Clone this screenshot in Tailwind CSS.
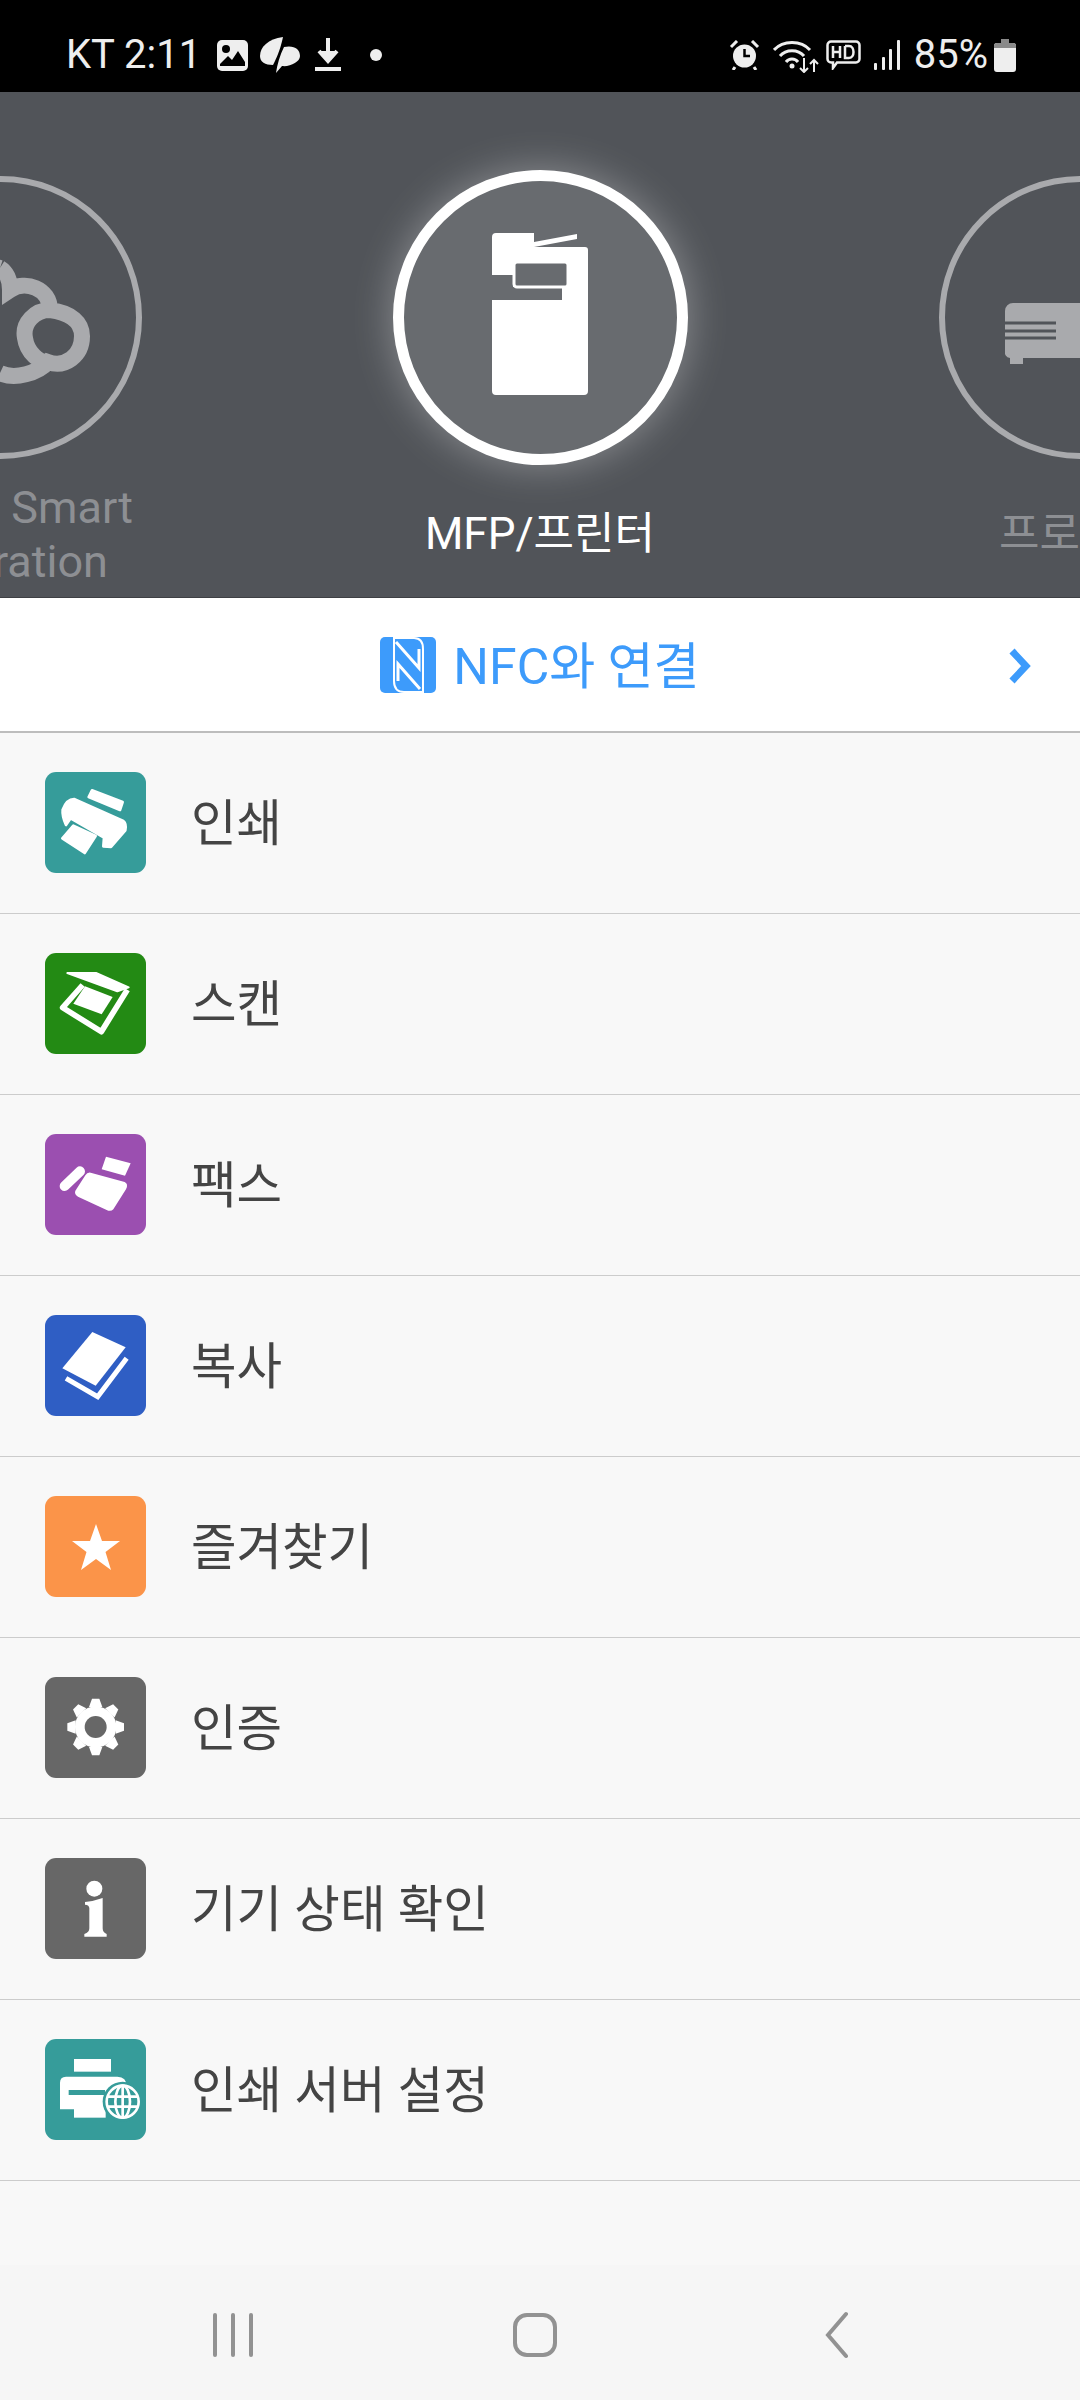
<!DOCTYPE html>
<html>
  <head>
    <title>MFP</title>
    <script src="https://cdn.jsdelivr.net/npm/@tailwindcss/browser@4"></script>
  </head>
  <body class="bg-[#f8f8f8]">
    <main class="w-[1080px] h-[2400px] overflow-hidden flex flex-col font-['Roboto','Noto_Sans_CJK_KR',sans-serif]">
      <!-- status bar -->
      <div class="h-[92px] bg-black flex items-center justify-between pl-[66px] pr-[64px] text-[#eeeeee] text-[40px] pt-[18px] shrink-0">
        <div class="flex items-center">
          <span class="leading-none w-[131px] whitespace-nowrap">KT 2:11</span>
          <svg class="ml-[20px]" width="31" height="31" viewBox="0 0 31 31"><rect x="0" y="0" width="31" height="31" rx="5" fill="#eee"/><circle cx="9" cy="9" r="4" fill="#000"/><path d="M3 24 L11 16 L15 20 L21 11 L28 22 V26 H3 Z" fill="#000"/></svg>
          <svg class="ml-[12px]" width="41" height="36" viewBox="0 0 41 36"><path d="M23 0 C8 2 0 10 0 19 C0 25 5 28 13 28 C16 22 20 14 23 0 Z" fill="#eee"/><path d="M24 10 C34 8 40 12 40 19 C40 25 30 30 22 29 L16 36 C17 28 20 18 24 10 Z" fill="#eee"/></svg>
          <svg class="ml-[14px]" width="26" height="34" viewBox="0 0 26 34"><path d="M13 0 V20 M4 13 L13 23 L22 13" fill="#eee" stroke="#eee" stroke-width="4"/><rect x="0" y="29" width="26" height="4" fill="#eee"/></svg>
          <span class="ml-[29px] w-[12px] h-[12px] rounded-full bg-[#eee]"></span>
        </div>
        <div class="flex items-center">
          <svg width="31" height="30" viewBox="0 0 31 30"><circle cx="15.5" cy="16" r="11.5" fill="#eee"/><path d="M15.5 9 V16 H21" stroke="#000" stroke-width="2.5" fill="none"/><path d="M2 7 L8 1 M29 7 L23 1 M6 27 L4 30 M25 27 L27 30" stroke="#eee" stroke-width="3"/></svg>
          <svg class="ml-[13px]" width="46" height="35" viewBox="0 0 46 35"><path d="M1 12 C10 2 28 2 37 12 M7 18 C13 11 25 11 31 18 M13 24 C16 20 22 20 25 24" stroke="#eee" stroke-width="3" fill="none"/><circle cx="19" cy="28" r="2.5" fill="#eee"/><path d="M31 20 V34 M27 30 L31 34 L35 30 M41 34 V22 M37 26 L41 22 L45 26" stroke="#eee" stroke-width="2" fill="none"/></svg>
          <svg class="ml-[7px]" width="35" height="30" viewBox="0 0 35 30"><path d="M5 1.5 H30 A3.5 3.5 0 0 1 33.500 5 V19 A3.500 3.500 0 0 1 30 22.500 H11 L7 28 V22.500 H5 A3.500 3.500 0 0 1 1.500 19 V5 A3.500 3.500 0 0 1 5 1.500 Z" stroke="#eee" stroke-width="2.500" fill="none"/><path d="M7 6 V18 M14 6 V18 M7 12 H14 M19 6 V18 H23 C29 18 29 6 23 6 H19" stroke="#eee" stroke-width="2.500" fill="none"/></svg>
          <svg class="ml-[12px]" width="28" height="30" viewBox="0 0 28 30"><rect x="1" y="23" width="3" height="7" rx="1" fill="#eee"/><rect x="9" y="17" width="3" height="13" rx="1" fill="#eee"/><rect x="16" y="9" width="3" height="21" rx="1" fill="#eee"/><rect x="24" y="0" width="3" height="30" rx="1" fill="#eee"/></svg>
          <span class="ml-[13px] leading-none">85%</span>
          <svg class="ml-[6px]" width="22" height="33" viewBox="0 0 22 33"><path d="M7 0 H15 V4 H19 A3 3 0 0 1 22 7 V30 A3 3 0 0 1 19 33 H3 A3 3 0 0 1 0 30 V7 A3 3 0 0 1 3 4 H7 Z" fill="#eee"/><path d="M7 0 H15 V4 H19 A3 3 0 0 1 22 7 V9 H0 V7 A3 3 0 0 1 3 4 H7 Z" fill="#8a8a8a"/></svg>
        </div>
      </div>

      <!-- device carousel -->
      <section class="h-[506px] bg-[#515459] border-b border-[#3e4044] overflow-hidden flex shrink-0">
        <div class="w-[540px] shrink-0 ml-[-270px] flex flex-col items-center pt-[84px]">
          <div class="w-[283px] h-[283px] rounded-full border-[6px] border-[#a9aaad] flex items-center justify-center">
            <svg class="overflow-visible" width="200" height="200" viewBox="-100 -100 200 200"><path d="M0 -50 C8 -45 10 -35 10 -28 C25 -38 50 -30 50 -8 C72 -5 82 5 82 18 C82 38 65 50 48 44 C38 55 15 62 0 55 M50 -8 C35 -8 22 5 25 20 C27 35 40 45 48 44 M0 -50 C-30 -60 -60 -30 -50 -10 C-80 -5 -90 50 -40 55 C-30 60 -15 60 0 55" fill="none" stroke="#a9aaad" stroke-width="16"/></svg>
          </div>
          <div class="mt-[22px] text-[45px] leading-[54px] text-[#8d8f93] text-center whitespace-nowrap">Device Smart<br />Integration</div>
        </div>
        <div class="w-[540px] shrink-0 flex flex-col items-center pt-[78px]">
          <div class="w-[295px] h-[295px] rounded-full border-[11px] border-white bg-[#686b6f] shadow-[0_0_40px_rgba(255,255,255,0.35)] flex items-center justify-center">
            <svg class="mb-[7px]" width="96" height="162" viewBox="0 0 96 162"><path d="M42 9 L85 1 V6 L42 14 Z" fill="#fff"/><path d="M4 0 H42 V14 H93 A3 3 0 0 1 96 17 V158 A4 4 0 0 1 92 162 H4 A4 4 0 0 1 0 158 V67 H70 V54 H21 V42 H0 V4 A4 4 0 0 1 4 0 Z" fill="#fff"/><rect x="22" y="29" width="54" height="25" rx="3" fill="#686b6f" stroke="#fff" stroke-width="3"/></svg>
          </div>
          <div class="mt-[43px] text-[44px] leading-[52px] text-white">MFP/프린터</div>
        </div>
        <div class="w-[540px] shrink-0 flex flex-col items-center pt-[84px]">
          <div class="w-[283px] h-[283px] rounded-full border-[6px] border-[#a9aaad] flex items-center justify-center">
            <svg class="mt-[32px]" width="150" height="61" viewBox="0 0 150 61"><path d="M8 0 H142 A8 8 0 0 1 150 8 V47 A8 8 0 0 1 142 55 H18 V61 H5 V55 A6 6 0 0 1 0 47 V8 A8 8 0 0 1 8 0 Z" fill="#a9aaad"/><path d="M0 20 H51 M0 28 H51 M0 35 H51" stroke="#515459" stroke-width="3"/></svg>
          </div>
          <div class="mt-[49px] text-[44px] leading-[52px] text-[#8d8f93] whitespace-nowrap">프로젝터</div>
        </div>
      </section>

      <!-- nfc row -->
      <div class="h-[135px] bg-white border-b-2 border-[#bdbdbd] flex items-center justify-center relative shrink-0">
        <svg class="mt-[1px]" width="56" height="56" viewBox="0 0 56 56"><rect width="56" height="56" rx="5" fill="#3d9bfb"/><path d="M13 1 H34 Q43 1 43 12 V55 H24 Q14 55 14 44 V1" fill="none" stroke="#fff" stroke-width="2"/><path d="M16 5 L39 31 V12 M40 52 L18 27 V44" fill="none" stroke="#fff" stroke-width="3"/></svg>
        <span class="ml-[17px] mt-[4px] text-[50px] text-[#3d9bfb] leading-none">NFC와 연결</span>
        <svg class="absolute right-[49px] top-[50px]" width="22" height="36" viewBox="0 0 22 36"><path d="M3 3 L17 18 L3 33" fill="none" stroke="#3d9bfb" stroke-width="7"/></svg>
      </div>

      <!-- menu -->
      <ul class="flex flex-col shrink-0">
        <li class="h-[181px] border-b border-[#cccccc] flex items-center pl-[45px] gap-[45px]">
          <div class="w-[101px] h-[101px] mb-[1px] rounded-[11px] bg-[#369c9a]">
            <svg width="101" height="101" viewBox="45 37 303 303"><g fill="#fff" stroke="#fff" stroke-width="8" stroke-linejoin="round"><path d="M186 92 L278 127 L270 151 L176 112 Z"/><path d="M132 118 L280 184 Q290 192 286 212 L243 262 L220 260 L222 234 L122 176 L108 196 Q96 170 98 150 Q110 118 132 118 Z"/><path d="M130 198 L197 229 L164 280 L97 236 Z"/></g></svg>
          </div>
          <span class="text-[49.5px] leading-none text-[#444444] mt-[4px]">인쇄</span>
        </li>
        <li class="h-[181px] border-b border-[#cccccc] flex items-center pl-[45px] gap-[45px]">
          <div class="w-[101px] h-[101px] mb-[1px] rounded-[11px] bg-[#238a14]">
            <svg width="101" height="101" viewBox="45 40 303 303"><path d="M112 100 H198 L296 143 L262 155 Z" fill="#fff" stroke="#fff" stroke-width="6" stroke-linejoin="round"/><path d="M158 136 L98 204 L214 276 L292 150" fill="none" stroke="#fff" stroke-width="17" stroke-linejoin="round"/><path d="M165 140 L248 172 L215 224 L130 192 Z" fill="#fff"/></svg>
          </div>
          <span class="text-[49.5px] leading-none text-[#444444] mt-[4px]">스캔</span>
        </li>
        <li class="h-[181px] border-b border-[#cccccc] flex items-center pl-[45px] gap-[45px]">
          <div class="w-[101px] h-[101px] mb-[1px] rounded-[11px] bg-[#9b4fb0]">
            <svg width="101" height="101" viewBox="45 42 303 303"><path d="M228 110 L302 130 L285 167 L215 148 Z" fill="#fff"/><path d="M182 158 L284 186 Q296 192 288 208 L250 268 Q242 276 230 270 L144 230 Q128 220 140 206 L166 166 Q172 156 182 158 Z" fill="#fff"/><path d="M150 154 L104 198" stroke="#fff" stroke-width="30" stroke-linecap="round"/></svg>
          </div>
          <span class="text-[49.5px] leading-none text-[#444444] mt-[4px]">팩스</span>
        </li>
        <li class="h-[181px] border-b border-[#cccccc] flex items-center pl-[45px] gap-[45px]">
          <div class="w-[101px] h-[101px] mb-[1px] rounded-[11px] bg-[#2f5ec4]">
            <svg width="101" height="101" viewBox="45 45 303 303"><path d="M187 96 L287 142 L197 257 L97 205 Z" fill="#fff"/><path d="M108 235 L203 290 L290 175" fill="none" stroke="#fff" stroke-width="15"/></svg>
          </div>
          <span class="text-[49.5px] leading-none text-[#444444] mt-[4px]">복사</span>
        </li>
        <li class="h-[181px] border-b border-[#cccccc] flex items-center pl-[45px] gap-[45px]">
          <div class="w-[101px] h-[101px] mb-[1px] rounded-[11px] bg-[#fb9449] flex items-center justify-center">
            <svg width="48" height="46" viewBox="0 0 48 46"><path d="M24 0 L30 17 H48 L33.500 28 L39 46 L24 35 L9 46 L14.500 28 L0 17 H18 Z" fill="#fff"/></svg>
          </div>
          <span class="text-[49.5px] leading-none text-[#444444] mt-[4px]">즐겨찾기</span>
        </li>
        <li class="h-[181px] border-b border-[#cccccc] flex items-center pl-[45px] gap-[45px]">
          <div class="w-[101px] h-[101px] mb-[1px] rounded-[11px] bg-[#676767]">
            <svg width="101" height="101" viewBox="45 51 303 303"><g transform="translate(197 201)" fill="#fff"><circle r="62"/><path d="M-20 -60 L-11 -85 H11 L20 -60 Z"/><path transform="rotate(45)" d="M-20 -60 L-11 -85 H11 L20 -60 Z"/><path transform="rotate(90)" d="M-20 -60 L-11 -85 H11 L20 -60 Z"/><path transform="rotate(135)" d="M-20 -60 L-11 -85 H11 L20 -60 Z"/><path transform="rotate(180)" d="M-20 -60 L-11 -85 H11 L20 -60 Z"/><path transform="rotate(225)" d="M-20 -60 L-11 -85 H11 L20 -60 Z"/><path transform="rotate(270)" d="M-20 -60 L-11 -85 H11 L20 -60 Z"/><path transform="rotate(315)" d="M-20 -60 L-11 -85 H11 L20 -60 Z"/><circle r="33" fill="#676767"/></g></svg>
          </div>
          <span class="text-[49.5px] leading-none text-[#444444] mt-[4px]">인증</span>
        </li>
        <li class="h-[181px] border-b border-[#cccccc] flex items-center pl-[45px] gap-[45px]">
          <div class="w-[101px] h-[101px] mb-[1px] rounded-[11px] bg-[#676767]">
            <svg width="101" height="101" viewBox="45 54 303 303"><circle cx="193" cy="146" r="24" fill="#fff"/><path d="M165 186 Q190 184 218 174 V265 Q218 278 230 282 V290 H163 V282 Q178 278 178 265 V205 Q178 195 165 194 Z" fill="#fff"/></svg>
          </div>
          <span class="text-[49.5px] leading-none text-[#444444] mt-[4px]">기기 상태 확인</span>
        </li>
        <li class="h-[181px] border-b border-[#cccccc] flex items-center pl-[45px] gap-[45px]">
          <div class="w-[101px] h-[101px] mb-[1px] rounded-[11px] bg-[#369c9a]">
            <svg width="101" height="101" viewBox="45 57 303 303"><rect x="132" y="117" width="111" height="38" fill="#fff"/><path d="M108 170 H262 Q290 170 290 200 V268 H225 V225 H132 V268 H90 V188 Q90 170 108 170 Z M116 210 V262 H112 V210 Z" fill="#fff"/><path d="M116 210 H225 V225 H116 Z" fill="#369c9a"/><rect x="132" y="225" width="95" height="68" fill="#fff"/><circle cx="278" cy="245" r="60" fill="#369c9a"/><g fill="none" stroke="#fff" stroke-width="8"><circle cx="278" cy="245" r="48"/><ellipse cx="278" cy="245" rx="22" ry="48"/><path d="M278 197 V293 M232 230 H324 M232 260 H324"/></g></svg>
          </div>
          <span class="text-[49.5px] leading-none text-[#444444] mt-[4px]">인쇄 서버 설정</span>
        </li>
      </ul>

      <!-- system nav -->
      <nav class="mt-auto h-[135px] bg-[#f6f6f6] flex items-center shrink-0 pt-[5px]">
        <div class="pl-[213px] flex gap-[14px]">
          <span class="w-[4px] h-[44px] rounded-full bg-[#929292]"></span>
          <span class="w-[4px] h-[44px] rounded-full bg-[#929292]"></span>
          <span class="w-[4px] h-[44px] rounded-full bg-[#929292]"></span>
        </div>
        <div class="ml-[260px] w-[44px] h-[44px] rounded-[14px] border-[4px] border-[#929292]"></div>
        <svg class="ml-[265px]" width="26" height="48" viewBox="0 0 26 48"><path d="M24 3 L6 24 L24 45" fill="none" stroke="#929292" stroke-width="4" stroke-linecap="round"/></svg>
      </nav>
    </main>
  </body>
</html>
